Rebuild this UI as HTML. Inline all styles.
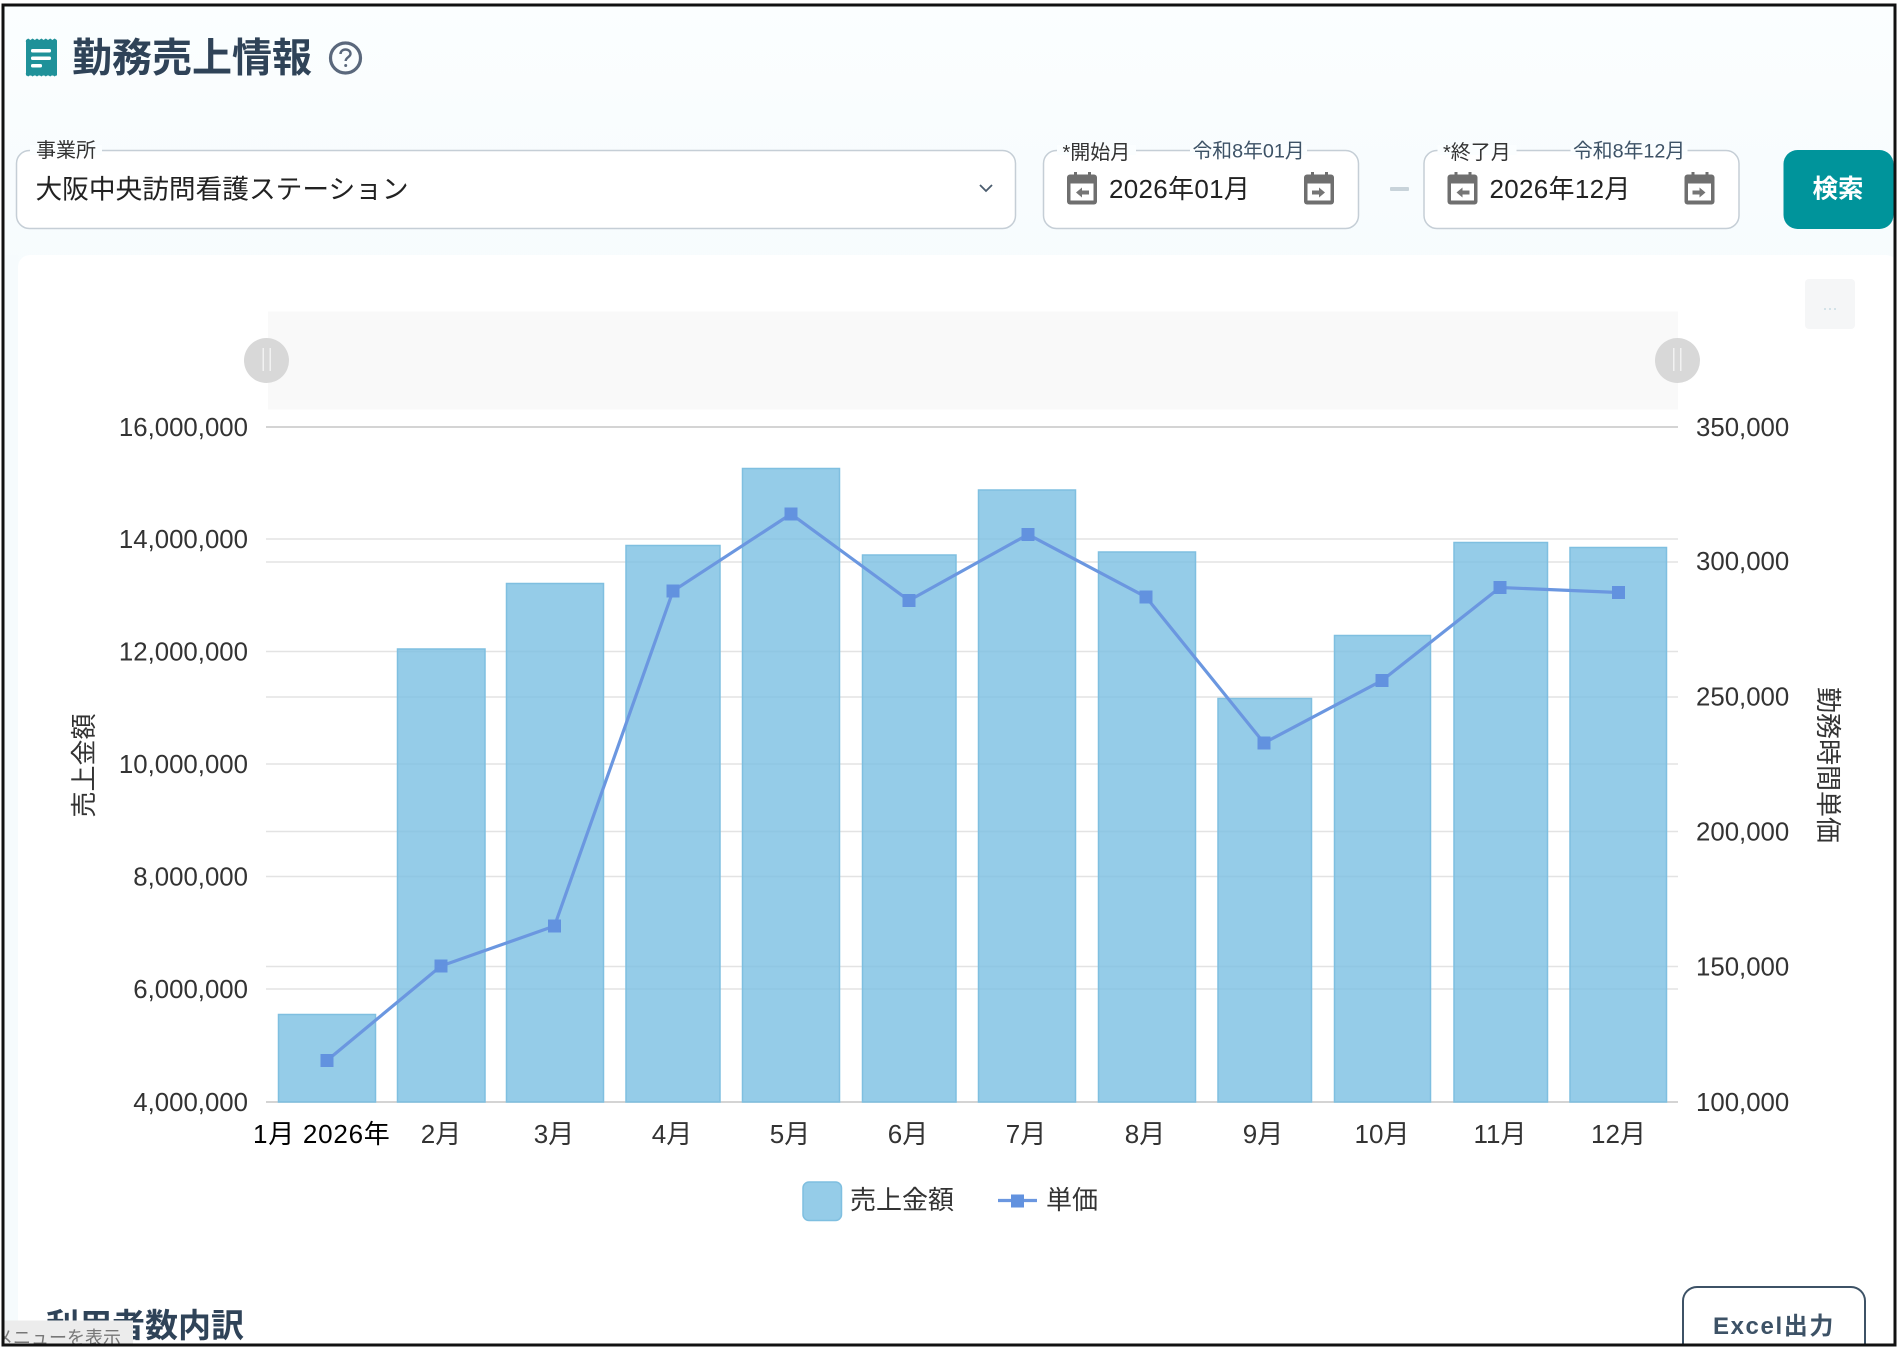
<!DOCTYPE html>
<html lang="ja">
<head>
<meta charset="utf-8">
<title>勤務売上情報</title>
<style>
html,body{margin:0;padding:0;width:1898px;height:1350px;overflow:hidden;background:#fff}
svg{display:block;position:absolute;left:0;top:0}
text{font-family:"Liberation Sans","Noto Sans CJK JP",sans-serif}
</style>
</head>
<body>
<svg width="1898" height="1350" viewBox="0 0 1898 1350" xmlns="http://www.w3.org/2000/svg">
<defs>
<linearGradient id="bg" x1="0" y1="0" x2="0" y2="1">
<stop offset="0" stop-color="#fbfeff"/><stop offset="1" stop-color="#f6fbfd"/>
</linearGradient>
<clipPath id="frame"><rect x="4" y="6" width="1890" height="1338"/></clipPath>
<g id="cal-l">
<rect x="0" y="2.500" width="30" height="30" rx="3" fill="#6f6f6f"/>
<rect x="7" y="0" width="3" height="5" fill="#6f6f6f"/><rect x="21" y="0" width="3" height="5" fill="#6f6f6f"/>
<rect x="3.500" y="11.500" width="23" height="17" fill="#fff"/>
<path d="M9 20.500l6-5v3h7v4h-7v3z" fill="#757575"/>
</g>
<g id="cal-r">
<rect x="0" y="2.500" width="30" height="30" rx="3" fill="#6f6f6f"/>
<rect x="7" y="0" width="3" height="5" fill="#6f6f6f"/><rect x="21" y="0" width="3" height="5" fill="#6f6f6f"/>
<rect x="3.500" y="11.500" width="23" height="17" fill="#fff"/>
<path d="M21 20.500l-6-5v3h-7v4h7v3z" fill="#757575"/>
</g>
</defs>

<rect width="1898" height="1350" fill="#fff"/>
<g clip-path="url(#frame)">
<rect x="0" y="0" width="1898" height="300" fill="url(#bg)"/>
<rect x="0" y="255" width="18" height="1095" fill="#f6fbfd"/>
<rect x="18" y="255" width="1880" height="1095" rx="12" fill="#fff"/>

<!-- title -->
<path d="M26 40.500h31v35h-31z" fill="#1f9199"/>
<path d="M26 40l2.200-1.500 2.200 1.500 2.200-1.500 2.200 1.500 2.200-1.500 2.200 1.500 2.200-1.500 2.200 1.500 2.200-1.500 2.200 1.500 2.200-1.500 2.200 1.500 2.200-1.500 2.200 1.500v2h-31z" fill="#1f9199"/>
<path d="M26 75l2.200 1.500 2.200-1.500 2.200 1.500 2.200-1.500 2.200 1.500 2.200-1.500 2.200 1.500 2.200-1.500 2.200 1.500 2.200-1.500 2.200 1.500 2.200-1.500 2.200 1.500 2.200-1.500v-2h-31z" fill="#1f9199"/>
<rect x="31" y="49" width="20" height="3.500" rx="1.500" fill="#fff"/>
<rect x="31" y="56.500" width="20" height="3.500" rx="1.500" fill="#fff"/>
<rect x="31" y="64" width="11" height="3.500" rx="1.500" fill="#fff"/>
<text x="72" y="71.500" font-size="40" font-weight="700" fill="#2f4358">勤務売上情報</text>
<circle cx="345.500" cy="58" r="15" fill="none" stroke="#5a687c" stroke-width="3.200"/>
<path d="M340.500 54c0-2.700 2.200-4.500 5-4.500 2.900 0 5 1.800 5 4.300 0 3.300-4.800 3.600-4.800 7.200" fill="none" stroke="#5a687c" stroke-width="2.400"/>
<circle cx="345.700" cy="65.500" r="1.500" fill="#5a687c"/>

<!-- select -->
<rect x="16.500" y="150.500" width="999" height="78" rx="13" fill="#fff" stroke="#c5ced6" stroke-width="1.500"/>
<rect x="30" y="145" width="72" height="10" fill="#fbfeff"/>
<text x="36" y="157" font-size="20" fill="#333">事業所</text>
<text x="35.500" y="198.500" font-size="26.700" fill="#222">大阪中央訪問看護ステーション</text>
<path d="M980 185l6 6 6-6" fill="none" stroke="#4a5c6e" stroke-width="1.800"/>

<!-- date 1 -->
<rect x="1043.500" y="150.500" width="315" height="78" rx="13" fill="#fff" stroke="#c5ced6" stroke-width="1.500"/>
<rect x="1057" y="145" width="79" height="10" fill="#fbfeff"/>
<rect x="1190" y="145" width="117" height="10" fill="#fbfeff"/>
<text x="1062.500" y="159" font-size="20" fill="#333">*開始月</text>
<text x="1192.500" y="157.500" font-size="19.800" fill="#3d5266">令和8年01月</text>
<use href="#cal-l" x="1067" y="172"/>
<text x="1109" y="198" font-size="26" letter-spacing=".3" fill="#222">2026年01月</text>
<use href="#cal-r" x="1304" y="172"/>

<rect x="1390" y="187" width="19" height="4" rx="1" fill="#c8d3da"/>

<!-- date 2 -->
<rect x="1424" y="150.500" width="315" height="78" rx="13" fill="#fff" stroke="#c5ced6" stroke-width="1.500"/>
<rect x="1437.500" y="145" width="79" height="10" fill="#fbfeff"/>
<rect x="1570.500" y="145" width="117" height="10" fill="#fbfeff"/>
<text x="1443" y="159" font-size="20" fill="#333">*終了月</text>
<text x="1573" y="157.500" font-size="19.800" fill="#3d5266">令和8年12月</text>
<use href="#cal-l" x="1447.500" y="172"/>
<text x="1489.500" y="198" font-size="26" letter-spacing=".3" fill="#222">2026年12月</text>
<use href="#cal-r" x="1684.500" y="172"/>

<!-- button -->
<rect x="1783.500" y="150" width="110" height="79" rx="14" fill="#00949b"/>
<text x="1838" y="197.500" font-size="25.500" font-weight="700" fill="#fff" text-anchor="middle">検索</text>

<!-- toolbox -->
<rect x="1805" y="279" width="50" height="50" rx="4" fill="#f5f6f7"/>
<text x="1830" y="310" font-size="18" fill="#cfe0e6" text-anchor="middle">...</text>

<!-- slider -->
<rect x="268" y="311.500" width="1410" height="98" fill="#f9f9f9"/>
<circle cx="266.500" cy="360.500" r="22.500" fill="#d8d8d8"/>
<rect x="262.500" y="348" width="1.500" height="23" fill="#f2f2f2"/><rect x="269.500" y="348" width="1.500" height="23" fill="#f2f2f2"/>
<circle cx="1677.500" cy="360.500" r="22.500" fill="#d8d8d8"/>
<rect x="1673" y="348" width="1.500" height="23" fill="#f2f2f2"/><rect x="1680" y="348" width="1.500" height="23" fill="#f2f2f2"/>

<!-- grid -->
<g stroke="#e3e3e3" stroke-width="1.500">
<path d="M266 539H1678M266 651.500H1678M266 764H1678M266 876.500H1678M266 989H1678"/>
<path d="M266 562H1678M266 697H1678M266 831.500H1678M266 966.500H1678"/>
</g>
<path d="M266 427H1678" stroke="#c6c6c6" stroke-width="1.500"/>
<path d="M266 1102H1678" stroke="#c6c6c6" stroke-width="1.500"/>

<!-- bars -->
<g fill="#7bbfe2" fill-opacity=".8" stroke="#7fbfe0" stroke-width="1.500">
<rect x="278.500" y="1014.500" width="97" height="87.500"/>
<rect x="397.500" y="649" width="87.500" height="453"/>
<rect x="506.500" y="583.500" width="97" height="518.500"/>
<rect x="626" y="545.500" width="94" height="556.500"/>
<rect x="742.500" y="468.500" width="97" height="633.500"/>
<rect x="862.500" y="555" width="93.500" height="547"/>
<rect x="978.500" y="490" width="97" height="612"/>
<rect x="1098.500" y="552" width="97" height="550"/>
<rect x="1218" y="698.500" width="93.500" height="403.500"/>
<rect x="1334.500" y="635.500" width="96" height="466.500"/>
<rect x="1454" y="542.500" width="93.500" height="559.500"/>
<rect x="1570" y="547.500" width="96.500" height="554.500"/>
</g>

<!-- line -->
<polyline points="327,1060.500 441,966 554.500,926 673,591 791,514 909,600.500 1028,534.500 1146,597 1264,743 1382,680.500 1500,587.500 1618.500,592.500" fill="none" stroke="#6b97e0" stroke-width="3.200"/>
<g fill="#6292df">
<rect x="320.500" y="1054" width="13" height="13"/>
<rect x="434.500" y="959.500" width="13" height="13"/>
<rect x="548" y="919.500" width="13" height="13"/>
<rect x="666.500" y="584.500" width="13" height="13"/>
<rect x="784.500" y="507.500" width="13" height="13"/>
<rect x="902.500" y="594" width="13" height="13"/>
<rect x="1021.500" y="528" width="13" height="13"/>
<rect x="1139.500" y="590.500" width="13" height="13"/>
<rect x="1257.500" y="736.500" width="13" height="13"/>
<rect x="1375.500" y="674" width="13" height="13"/>
<rect x="1493.500" y="581" width="13" height="13"/>
<rect x="1612" y="586" width="13" height="13"/>
</g>

<!-- y labels -->
<g font-size="25.800" fill="#333" text-anchor="end">
<text x="248" y="436">16,000,000</text>
<text x="248" y="548">14,000,000</text>
<text x="248" y="660.500">12,000,000</text>
<text x="248" y="773">10,000,000</text>
<text x="248" y="885.500">8,000,000</text>
<text x="248" y="998">6,000,000</text>
<text x="248" y="1111">4,000,000</text>
</g>
<g font-size="25.800" fill="#333">
<text x="1696" y="436">350,000</text>
<text x="1696" y="570">300,000</text>
<text x="1696" y="705.500">250,000</text>
<text x="1696" y="840.500">200,000</text>
<text x="1696" y="975.500">150,000</text>
<text x="1696" y="1111">100,000</text>
</g>

<!-- x labels -->
<text x="253" y="1143" font-size="26" letter-spacing=".75" fill="#000">1月 2026年</text>
<g font-size="26" fill="#333" text-anchor="middle">
<text x="441" y="1143">2月</text>
<text x="554" y="1143">3月</text>
<text x="672" y="1143">4月</text>
<text x="790" y="1143">5月</text>
<text x="908" y="1143">6月</text>
<text x="1026" y="1143">7月</text>
<text x="1145" y="1143">8月</text>
<text x="1263" y="1143">9月</text>
<text x="1382" y="1143">10月</text>
<text x="1500" y="1143">11月</text>
<text x="1618.500" y="1143">12月</text>
</g>

<!-- axis titles -->
<text transform="translate(93 765.500) rotate(-90)" font-size="26" fill="#333" text-anchor="middle">売上金額</text>
<text transform="translate(1819 765) rotate(90)" font-size="26" fill="#333" text-anchor="middle">勤務時間単価</text>

<!-- legend -->
<rect x="803" y="1182" width="38.500" height="38.500" rx="6" fill="#95cce8" stroke="#7fbfe0" stroke-width="1.500"/>
<text x="850" y="1209" font-size="26" fill="#333">売上金額</text>
<path d="M998 1200.500H1037" stroke="#6b97e0" stroke-width="3.200"/>
<rect x="1011" y="1194.500" width="13" height="13" fill="#6292df"/>
<text x="1046" y="1209" font-size="26" fill="#333">単価</text>

<!-- bottom -->
<text x="46" y="1337" font-size="33" font-weight="700" fill="#2f4358">利用者数内訳</text>
<rect x="0" y="1320.500" width="133" height="30" fill="#ececec"/>
<text x="-5" y="1344" font-size="18" fill="#777">メニューを表示</text>
<rect x="1683" y="1287" width="182" height="80" rx="14" fill="#fff" stroke="#3d5266" stroke-width="2"/>
<text x="1713" y="1334" font-size="24" font-weight="700" fill="#3d5266" letter-spacing="1.600">Excel出力</text>
</g>

<!-- frame -->
<rect x="3" y="5" width="1892" height="1340" fill="none" stroke="#111" stroke-width="3"/>
</svg>
</body>
</html>
